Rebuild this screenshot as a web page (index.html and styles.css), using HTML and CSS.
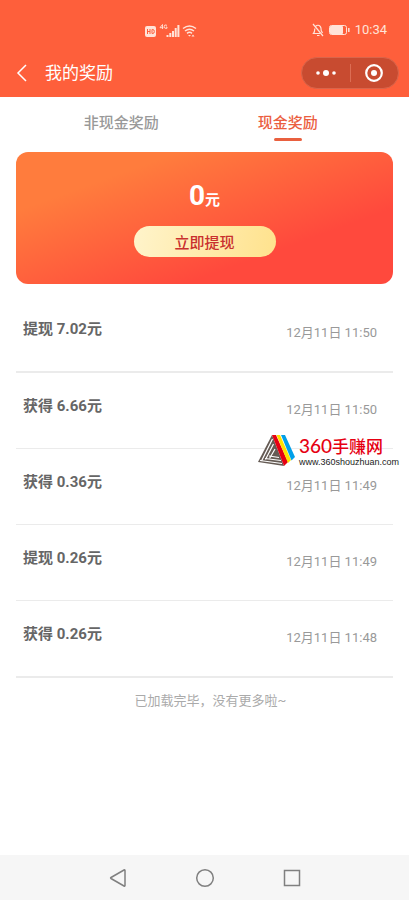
FILE: index.html
```html
<!DOCTYPE html>
<html lang="zh-CN">
<head>
<meta charset="utf-8">
<meta name="viewport" content="width=device-width, initial-scale=1">
<title>我的奖励</title>
<link rel="stylesheet" href="styles.css">
</head>
<body>
<header class="top">
  <div class="status">
    <svg class="signals" width="52" height="16" viewBox="0 0 52 16" fill="currentColor" aria-hidden="true">
      <rect x="0" y="3" width="11" height="11" rx="2"/>
      <path d="M2.500 6v5M5 6v5M2.500 8.500H5M7 6.500v4h.8q1.500 0 1.500-2T7.800 6.500z" fill="none" stroke="#fe5f3b"/>
      <path d="M17.500 6V1.500L15 4.700h3.500M22 2.300q-2.800-1.300-2.800 1.200T22 5.300V4h-1" fill="none" stroke="currentColor" stroke-width=".9"/>
      <path d="M21.500 12h2v2h-2zM24.300 10h2v4h-2zM27 8h2v6h-2zM29.700 5h2v9h-2zM32.400 2h2v12h-2z"/>
      <path d="M38 5.500q6.500-5 13 0M40 8q4.500-3.500 9 0M42 10.300q2.500-2 5 0" fill="none" stroke="currentColor" stroke-width="1.500"/>
      <path d="M43 12l1.500 1.500L46 12zM46.500 13.500l1.500-2 1.500 2z"/>
    </svg>
    <div class="status-right">
      <svg width="12" height="14" viewBox="0 0 12 14" fill="none" stroke="currentColor" stroke-width="1.200" aria-hidden="true">
        <path d="M1 1l10 12M3.500 3.500Q6 1 8.300 3.500 9.200 4.500 9.200 7.500l1.300 2.500M8 10.500H1.500q1.300-1.500 1.300-5M5 12.500h2.500"/>
      </svg>
      <svg width="21" height="10" viewBox="0 0 21 10" aria-hidden="true">
        <rect x=".5" y=".5" width="17" height="9" rx="2" fill="none" stroke="currentColor"/>
        <rect x="1" y="1" width="13" height="8" rx="1" fill="currentColor"/>
        <path d="M19.800 3v4" stroke="currentColor" stroke-width="1.500"/>
      </svg>
      <time>10:34</time>
    </div>
  </div>
  <div class="nav">
    <button class="back" aria-label="返回">
      <svg width="12" height="18" viewBox="0 0 12 18" fill="none" stroke="currentColor" stroke-width="1.500" aria-hidden="true"><path d="M10 1L2 9l8 8"/></svg>
    </button>
    <h1>我的奖励</h1>
    <div class="capsule">
      <button aria-label="更多">
        <svg width="20" height="8" viewBox="0 0 20 8" fill="currentColor" aria-hidden="true"><circle cx="2" cy="4" r="1.800"/><circle cx="10" cy="4" r="3"/><circle cx="18" cy="4" r="1.800"/></svg>
      </button>
      <button aria-label="关闭">
        <svg width="18" height="18" viewBox="0 0 18 18" aria-hidden="true"><circle cx="9" cy="9" r="7.800" fill="none" stroke="currentColor" stroke-width="2.200"/><circle cx="9" cy="9" r="3" fill="currentColor"/></svg>
      </button>
    </div>
  </div>
</header>

<main>
  <nav class="tabs">
    <a href="#other">非现金奖励</a>
    <a href="#cash" class="active" aria-current="page">现金奖励</a>
  </nav>

  <section class="card">
    <p class="balance">0<small>元</small></p>
    <button class="withdraw">立即提现</button>
  </section>

  <ul class="records">
    <li><strong>提现 7.02元</strong><time>12月11日 11:50</time></li>
    <li><strong>获得 6.66元</strong><time>12月11日 11:50</time></li>
    <li><strong>获得 0.36元</strong><time>12月11日 11:49</time>
      <div class="watermark">
        <svg width="37" height="33" viewBox="0 0 37 33" aria-hidden="true">
          <path d="M14 1L0 28l26 4z" fill="#655b54"/>
          <path d="M14.500 5L3.500 27M15.500 10L7.500 25.500M17 15l-5.500 9.500" stroke="#fff" stroke-width="1.200"/>
          <path d="M2 26.500l22 3M7 24.500l16 2M11 22l10 1.500" stroke="#fff" stroke-width="1.100"/>
          <path d="M14 1h4l12 27-4 4z" fill="#e60012"/>
          <path d="M18.500 1H22l11 25-3 3z" fill="#ffe100"/>
          <path d="M23 1h4l10 22-3.500 3.500z" fill="#00a0e9"/>
        </svg>
        <div class="brand"><b><span class="digits">360</span>手赚网</b><span>www.360shouzhuan.com</span></div>
      </div>
    </li>
    <li><strong>提现 0.26元</strong><time>12月11日 11:49</time></li>
    <li><strong>获得 0.26元</strong><time>12月11日 11:48</time></li>
  </ul>
  <p class="end">已加载完毕，没有更多啦~</p>
</main>

<footer class="system">
  <button aria-label="返回"><svg width="18" height="20" viewBox="0 0 18 20" aria-hidden="true"><path d="M15 2q1-.5 1 .5v15q0 1-1 .5L2 10.500q-.8-.5 0-1z"/></svg></button>
  <button aria-label="主页"><svg width="20" height="20" viewBox="0 0 20 20" aria-hidden="true"><circle cx="10" cy="10" r="8.300"/></svg></button>
  <button aria-label="最近任务"><svg width="18" height="18" viewBox="0 0 18 18" aria-hidden="true"><rect x="1.500" y="1.500" width="15" height="15"/></svg></button>
</footer>
</body>
</html>
```
FILE: styles.css
```css
* { box-sizing: border-box; }

body {
  margin: 0;
  min-height: 100vh;
  display: flex;
  flex-direction: column;
  background: #fff;
  color: #666;
  font-family: Roboto, "Noto Sans CJK SC", sans-serif;
  font-size: 15px;
}

button {
  border: 0;
  padding: 0;
  background: none;
  color: inherit;
  font: inherit;
}

svg { display: block; }
h1, p, ul { margin: 0; }

.top {
  background: #fe5f3b;
  color: #fff;
}

.status {
  display: flex;
  justify-content: space-between;
  align-items: flex-end;
  height: 40px;
  padding: 0 22px 0 145px;
  color: #ffe3d8;
}
.signals { margin-bottom: 1px; }

.status-right {
  display: flex;
  align-items: center;
  gap: 5px;
  font-size: 13px;
  line-height: 20px;
}

.nav {
  display: flex;
  align-items: center;
  height: 57px;
  padding: 16px 10px 8px 16px;
}

.back { margin-right: 17px; }

.nav h1 {
  flex: 1;
  font-size: 17px;
  font-weight: 400;
  line-height: 24px;
}

.capsule {
  display: flex;
  width: 98px;
  height: 32px;
  border: 1px solid #d9654b;
  border-radius: 16px;
  background: #c84b30;
}

.capsule button {
  position: relative;
  flex: 1;
  display: flex;
  align-items: center;
  justify-content: center;
}
.capsule button + button::before {
  content: "";
  position: absolute;
  left: 0;
  top: 6px;
  bottom: 6px;
  width: 1px;
  background: #dc6d54;
}

main {
  flex: 1;
  padding: 0 16px;
}

.tabs {
  display: flex;
  height: 55px;
  padding: 15px 22px 0;
}
.tabs a {
  flex: 1;
  display: flex;
  flex-direction: column;
  align-items: center;
  gap: 4px;
  color: #999;
  font-weight: 500;
  line-height: 22px;
  text-decoration: none;
}
.tabs .active { color: #eb5e3f; }
.tabs .active::after {
  content: "";
  width: 28px;
  height: 3px;
  border-radius: 2px;
  background: #e9603f;
}

.card {
  display: flex;
  flex-direction: column;
  align-items: center;
  gap: 14px;
  padding: 28px 0 27px;
  border-radius: 12px;
  background: linear-gradient(160deg, #ff7c3d 22%, #ff493d 72%);
  color: #fff;
}
.balance {
  display: flex;
  align-items: baseline;
  font-size: 28px;
  font-weight: 700;
  line-height: 32px;
}
.balance small {
  font-size: 15px;
  line-height: 20px;
}
.withdraw {
  width: 142px;
  height: 31px;
  border-radius: 16px;
  background: linear-gradient(100deg, #fff4cb, #ffe28d);
  color: #c9302e;
  font-weight: 500;
}

.records {
  padding: 12px 0 0;
  list-style: none;
}
.records li {
  position: relative;
  display: flex;
  justify-content: space-between;
  height: 76px;
  padding: 22px 16px 0 7px;
  border-bottom: 1px solid #ebebeb;
}
.records li:nth-child(4n + 1) {
  height: 77px;
  border-bottom-width: 2px;
}
.records strong {
  font-weight: 700;
  line-height: 22px;
}
.records time {
  margin-top: 4px;
  color: #999;
  font-size: 13px;
  line-height: 22px;
}

.watermark {
  position: absolute;
  right: -6px;
  top: -15px;
  display: flex;
  gap: 4px;
}
.brand {
  display: flex;
  flex-direction: column;
  color: #222;
  font-family: "Liberation Sans", sans-serif;
  font-size: 9px;
  line-height: 10px;
}
.brand b {
  color: #e60012;
  font-family: "Noto Sans CJK SC", sans-serif;
  font-size: 17px;
  font-weight: 500;
  line-height: 23px;
}
.digits {
  font-family: Lato, sans-serif;
  font-size: 19px;
}

.end {
  padding: 12px 0 0 12px;
  color: #aaa;
  font-size: 13px;
  line-height: 22px;
  text-align: center;
}

.system {
  display: flex;
  align-items: center;
  justify-content: center;
  gap: 68px;
  height: 45px;
  background: #f6f6f6;
}
.system svg {
  fill: none;
  stroke: #808080;
  stroke-width: 1.5;
}
```
